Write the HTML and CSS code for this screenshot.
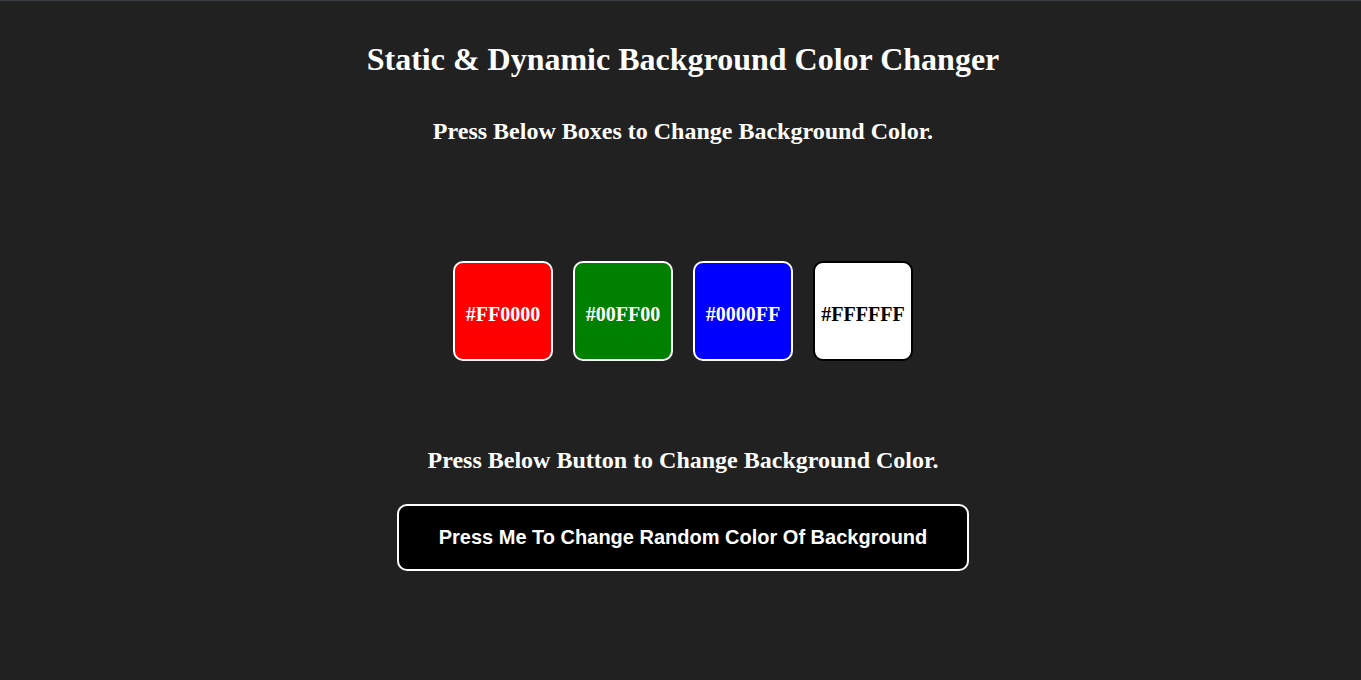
FILE: index.html
```html
<!DOCTYPE html>
<html>
<head>
<meta charset="utf-8">
<link rel="stylesheet" href="styles.css">
</head>
<body>
<div class="page">
  <h1 class="title">Static &amp; Dynamic Background Color Changer</h1>
  <h3 class="subtitle">Press Below Boxes to Change Background Color.</h3>
  <div class="boxes">
    <div class="box red">#FF0000</div>
    <div class="box green">#00FF00</div>
    <div class="box blue">#0000FF</div>
    <div class="box white">#FFFFFF</div>
  </div>
  <h3 class="subtitle second">Press Below Button to Change Background Color.</h3>
  <button class="random">Press Me To Change Random Color Of Background</button>
</div>
</body>
</html>
```
FILE: styles.css
```css
html, body {
  margin: 0;
  padding: 0;
  height: 100%;
}
body {
  background: #212121;
  border-top: 1px solid #3b3e43;
  box-sizing: border-box;
  font-family: "Liberation Serif", "Times New Roman", serif;
  color: #fff;
}
.page {
  display: flex;
  flex-direction: column;
  align-items: center;
  padding-left: 5px;
}
.title {
  font-size: 32px;
  font-weight: bold;
  margin: 40px 0 0;
  line-height: 37px;
}
.subtitle {
  font-size: 24px;
  font-weight: bold;
  margin: 39px 0 0;
  line-height: 28px;
}
.boxes {
  display: flex;
  gap: 20px;
  margin-top: 116px;
}
.box {
  width: 100px;
  height: 100px;
  box-sizing: border-box;
  border: 2px solid #fff;
  border-radius: 10px;
  display: flex;
  align-items: center;
  justify-content: center;
  padding-top: 6px;
  font-size: 20px;
  font-weight: bold;
}
.red { background: #ff0000; }
.green { background: #008000; }
.blue { background: #0000ff; }
.white { background: #fff; color: #000; border-color: #000; }
.second {
  margin-top: 85px;
}
.random {
  margin-top: 30px;
  width: 572px;
  height: 67px;
  background: #000;
  color: #fff;
  border: 2px solid #fff;
  border-radius: 10px;
  font-family: "Liberation Sans", Arial, sans-serif;
  font-size: 20px;
  font-weight: bold;
  cursor: pointer;
}
```
